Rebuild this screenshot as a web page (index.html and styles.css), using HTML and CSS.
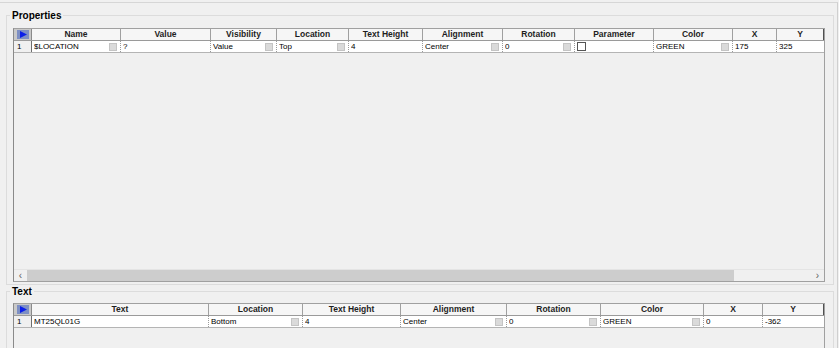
FILE: index.html
```html
<!DOCTYPE html>
<html>
<head>
<meta charset="utf-8">
<link rel="stylesheet" href="styles.css">
</head>
<body>
<div class="window">
  <div class="group props">
    <span class="legend">Properties</span>
    <div class="grid-table ptable">
      <div class="row head">
        <div class="cell corner"><svg width="12" height="9" viewBox="0 0 12 9"><rect x="0" y="0" width="12" height="9" fill="#7d8fc4"/><polygon points="3,1 10,4.5 3,8" fill="#0b1fe8"/></svg></div>
        <div class="cell">Name</div>
        <div class="cell">Value</div>
        <div class="cell">Visibility</div>
        <div class="cell">Location</div>
        <div class="cell">Text Height</div>
        <div class="cell">Alignment</div>
        <div class="cell">Rotation</div>
        <div class="cell">Parameter</div>
        <div class="cell">Color</div>
        <div class="cell">X</div>
        <div class="cell">Y</div>
      </div>
      <div class="row data">
        <div class="cell num">1</div>
        <div class="cell combo"><span>$LOCATION</span><i class="btn"></i></div>
        <div class="cell"><span>?</span></div>
        <div class="cell combo"><span>Value</span><i class="btn"></i></div>
        <div class="cell combo"><span>Top</span><i class="btn"></i></div>
        <div class="cell"><span>4</span></div>
        <div class="cell combo"><span>Center</span><i class="btn"></i></div>
        <div class="cell combo"><span>0</span><i class="btn"></i></div>
        <div class="cell"><i class="check"></i></div>
        <div class="cell combo"><span>GREEN</span><i class="btn"></i></div>
        <div class="cell"><span>175</span></div>
        <div class="cell"><span>325</span></div>
      </div>
      <div class="filler"></div>
      <div class="hscroll">
        <div class="arrow">&lsaquo;</div>
        <div class="thumb"></div>
        <div class="track"></div>
        <div class="arrow">&rsaquo;</div>
      </div>
    </div>
  </div>
  <div class="group text">
    <span class="legend">Text</span>
    <div class="grid-table ttable">
      <div class="row head">
        <div class="cell corner"><svg width="12" height="9" viewBox="0 0 12 9"><rect x="0" y="0" width="12" height="9" fill="#7d8fc4"/><polygon points="3,1 10,4.5 3,8" fill="#0b1fe8"/></svg></div>
        <div class="cell">Text</div>
        <div class="cell">Location</div>
        <div class="cell">Text Height</div>
        <div class="cell">Alignment</div>
        <div class="cell">Rotation</div>
        <div class="cell">Color</div>
        <div class="cell">X</div>
        <div class="cell">Y</div>
      </div>
      <div class="row data">
        <div class="cell num">1</div>
        <div class="cell"><span>MT25QL01G</span></div>
        <div class="cell combo"><span>Bottom</span><i class="btn"></i></div>
        <div class="cell"><span>4</span></div>
        <div class="cell combo"><span>Center</span><i class="btn"></i></div>
        <div class="cell combo"><span>0</span><i class="btn"></i></div>
        <div class="cell combo"><span>GREEN</span><i class="btn"></i></div>
        <div class="cell"><span>0</span></div>
        <div class="cell"><span>-362</span></div>
      </div>
      <div class="filler"></div>
    </div>
  </div>
</div>
</body>
</html>
```

FILE: styles.css
```css
* { box-sizing: border-box; }
html, body {
  margin: 0;
  padding: 0;
  width: 839px;
  height: 348px;
  overflow: hidden;
  background: #f0f0f0;
  font-family: "Liberation Sans", Arial, sans-serif;
  font-size: 8px;
  color: #000;
}
.window {
  margin-top: 2px;
  width: 838px;
  height: 346px;
  border-top: 1px solid #d6d6d6;
  border-right: 1px solid #cfcfcf;
  padding-top: 12px;
  overflow: hidden;
}
.group {
  margin-left: 6px;
  width: 828px;
  border: 1px solid #dcdcdc;
  display: flex;
  flex-direction: column;
}
.group.props {
  height: 270px;
  padding: 0 0 2px 6px;
}
.group.text {
  margin-top: 6px;
  height: 64px;
  flex: none;
  padding: 0 0 0 6px;
}
.legend {
  display: block;
  width: fit-content;
  margin: -6px 0 0 -3px;
  padding: 0 2px;
  background: #f0f0f0;
  font-size: 10px;
  font-weight: bold;
  line-height: 12px;
  color: #000;
}
.grid-table {
  width: 812px;
  border: 1px solid #a0a0a0;
  border-left-color: #8a8a8a;
  display: flex;
  flex-direction: column;
  background: #f0f0f0;
}
.ptable {
  margin-top: 6px;
  flex: 1;
}
.ttable {
  margin-top: 5px;
  flex: 1;
}
.row {
  display: grid;
}
.ptable .row {
  grid-template-columns: 18px 89px 90px 66px 72px 74px 80px 72px 79px 79px 44px 47px;
}
.ttable .row {
  grid-template-columns: 18px 177px 94px 98px 106px 94px 103px 59px 61px;
}
.head {
  height: 12px;
  border-bottom: 1px solid #9a9a9a;
}
.head .cell {
  background: #f6f6f6;
  border-right: 1px solid #a0a0a0;
  font-size: 8.5px;
  font-weight: bold;
  text-align: center;
  line-height: 11px;
  color: #1e1e1e;
  white-space: nowrap;
  overflow: hidden;
}
.head .cell:last-child {
  border-right: 1px solid #505050;
}
.head .corner {
  background: #c9c9c9;
  border-right: 1px solid #8a8a8a;
  display: flex;
  align-items: center;
  justify-content: center;
}
.head .corner svg {
  display: block;
}
.data {
  height: 12px;
  border-bottom: 1px solid #b4b4b4;
}
.data .cell {
  background: #fff;
  border-right: 1px dotted #9a9a9a;
  line-height: 11px;
  padding-left: 2px;
  display: flex;
  align-items: center;
  white-space: nowrap;
  overflow: hidden;
}
.data .cell span {
  flex: 1;
  overflow: hidden;
}
.data .cell:last-child {
  border-right: none;
}
.data .num {
  background: #f0f0f0;
  border-right: 1px solid #6e6e6e;
  padding-left: 3px;
}
.btn {
  display: block;
  width: 8px;
  height: 8px;
  margin-right: 3px;
  background: #dadada;
  border: 1px solid #c4c4c4;
  flex: none;
}
.check {
  display: block;
  width: 9px;
  height: 9px;
  background: #fff;
  border: 1px solid #555;
}
.filler {
  flex: 1;
}
.hscroll {
  height: 12px;
  display: flex;
  align-items: stretch;
  background: #f0f0f0;
  border-top: 1px solid #e4e4e4;
}
.arrow {
  width: 13px;
  flex: none;
  font-size: 10px;
  line-height: 11px;
  text-align: center;
  color: #606060;
}
.thumb {
  width: 707px;
  flex: none;
  background: #cdcdcd;
}
.track {
  flex: 1;
}
```
